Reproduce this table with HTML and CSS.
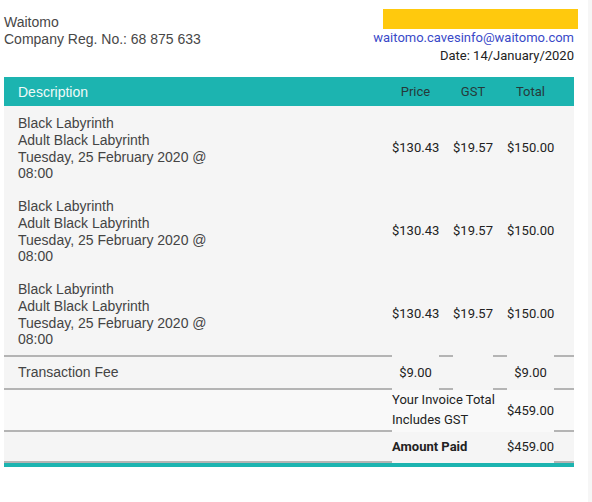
FILE: index.html
```html
<!DOCTYPE html>
<html lang="en">
<head>
<meta charset="utf-8">
<title>Invoice</title>
<link rel="stylesheet" href="styles.css">
</head>
<body>
<div class="page">
  <div class="main">
    <div class="top">
      <div class="company">
        <div>Waitomo</div>
        <div>Company Reg. No.: 68 875 633</div>
      </div>
      <div class="contact">
        <div class="logo-bar"></div>
        <div class="email">waitomo.cavesinfo@waitomo.com</div>
        <div class="date">Date: 14/January/2020</div>
      </div>
    </div>

    <div class="table">
      <div class="row head">
        <div class="desc">Description</div>
        <div class="num">Price</div>
        <div class="num">GST</div>
        <div class="num last">Total</div>
      </div>

      <div class="row item">
        <div class="desc">Black Labyrinth<br>Adult Black Labyrinth<br>Tuesday, 25 February 2020 @<br>08:00</div>
        <div class="num">$130.43</div>
        <div class="num">$19.57</div>
        <div class="num last">$150.00</div>
      </div>
      <div class="row item">
        <div class="desc">Black Labyrinth<br>Adult Black Labyrinth<br>Tuesday, 25 February 2020 @<br>08:00</div>
        <div class="num">$130.43</div>
        <div class="num">$19.57</div>
        <div class="num last">$150.00</div>
      </div>
      <div class="row item">
        <div class="desc">Black Labyrinth<br>Adult Black Labyrinth<br>Tuesday, 25 February 2020 @<br>08:00</div>
        <div class="num">$130.43</div>
        <div class="num">$19.57</div>
        <div class="num last">$150.00</div>
      </div>

      <div class="row fee">
        <div class="desc">Transaction Fee</div>
        <div class="num">$9.00</div>
        <div class="num"></div>
        <div class="num last">$9.00</div>
      </div>

      <div class="row sum invoice">
        <div class="desc"></div>
        <div class="label">Your Invoice Total<br>Includes GST</div>
        <div class="num last">$459.00</div>
      </div>

      <div class="row sum paid">
        <div class="desc"></div>
        <div class="label strong">Amount Paid</div>
        <div class="num last">$459.00</div>
      </div>
    </div>
    <div class="table-end"></div>
  </div>
  <div class="strip"></div>
</div>
</body>
</html>
```

FILE: styles.css
```css
html, body {
  margin: 0;
  padding: 0;
  background: #ffffff;
}

.page {
  display: flex;
  min-height: 502px;
}

.main {
  width: 570px;
  padding-left: 4px;
  margin-right: 14px;
}

.strip {
  width: 4px;
  background: #f6f6f6;
}

/* header */
.top {
  display: flex;
  justify-content: space-between;
  align-items: flex-start;
  margin-bottom: 12px;
}

.company {
  margin-top: 14px;
  font-family: "Liberation Sans", Arial, sans-serif;
  font-size: 14px;
  line-height: 17px;
  color: #474747;
}

.contact {
  display: flex;
  flex-direction: column;
  align-items: flex-end;
  padding-top: 9px;
  font-family: Roboto, "Liberation Sans", sans-serif;
  font-size: 13px;
  line-height: 18px;
}

.logo-bar {
  width: 195px;
  height: 20px;
  background: #ffc90d;
  margin-right: -4px;
}

.email {
  color: #3949c8;
}

.date {
  color: #222222;
}

/* table */
.row {
  display: grid;
  grid-template-columns: 381px 61px 54px 74px;
  background: #f5f5f5;
}

.desc {
  padding: 0 14px;
  font-family: "Liberation Sans", Arial, sans-serif;
  font-size: 14px;
  color: #444444;
}

.num {
  padding: 0 7px;
  text-align: center;
  font-family: Roboto, "Liberation Sans", sans-serif;
  font-size: 13px;
  color: #222222;
  white-space: nowrap;
}

.num.last {
  padding-right: 20px;
}

.head {
  background: #1cb4b0;
  height: 29px;
  align-items: center;
}

.head .desc {
  color: #effaf8;
}

.head .num {
  color: #26393a;
}

.item {
  align-items: center;
}

.item .desc {
  padding-top: 9px;
  padding-bottom: 7px;
  line-height: 16.75px;
}

/* segmented rule lines */
.fee > div {
  padding-top: 9px;
  padding-bottom: 9px;
  line-height: 17px;
  background:
    linear-gradient(#b4b4b4, #b4b4b4) left top / 7px 2px no-repeat,
    linear-gradient(#b4b4b4, #b4b4b4) right top / 7px 2px no-repeat,
    linear-gradient(#b4b4b4, #b4b4b4) left bottom / 7px 2px no-repeat,
    linear-gradient(#b4b4b4, #b4b4b4) right bottom / 7px 2px no-repeat;
}

.fee > .desc {
  background:
    linear-gradient(#b4b4b4, #b4b4b4) left top / 100% 2px no-repeat,
    linear-gradient(#b4b4b4, #b4b4b4) left bottom / 100% 2px no-repeat;
}

.fee > .num.last {
  background:
    linear-gradient(#b4b4b4, #b4b4b4) left top / 7px 2px no-repeat,
    linear-gradient(#b4b4b4, #b4b4b4) right top / 20px 2px no-repeat,
    linear-gradient(#b4b4b4, #b4b4b4) left bottom / 7px 2px no-repeat,
    linear-gradient(#b4b4b4, #b4b4b4) right bottom / 20px 2px no-repeat;
}

.sum {
  align-items: stretch;
}

.sum > div {
  display: flex;
  align-items: center;
  padding-bottom: 2px;
}

.sum > .desc {
  background: linear-gradient(#b4b4b4, #b4b4b4) left bottom / 100% 2px no-repeat;
}

.sum > .label {
  grid-column: span 2;
  padding-left: 7px;
  padding-right: 0;
  font-family: Roboto, "Liberation Sans", sans-serif;
  font-size: 13px;
  color: #222222;
  white-space: nowrap;
  background: linear-gradient(#b4b4b4, #b4b4b4) left bottom / 7px 2px no-repeat;
}

.sum > .num.last {
  justify-content: center;
  background: linear-gradient(#b4b4b4, #b4b4b4) right bottom / 20px 2px no-repeat;
}

.invoice {
  background: #f9f9f9;
}

.invoice > .label {
  line-height: 20px;
}

.paid > .label {
  padding-top: 6px;
  padding-bottom: 8px;
  line-height: 17px;
}

.strong {
  font-weight: bold;
}

.table-end {
  height: 4px;
  background: #1cb4b0;
}
```
